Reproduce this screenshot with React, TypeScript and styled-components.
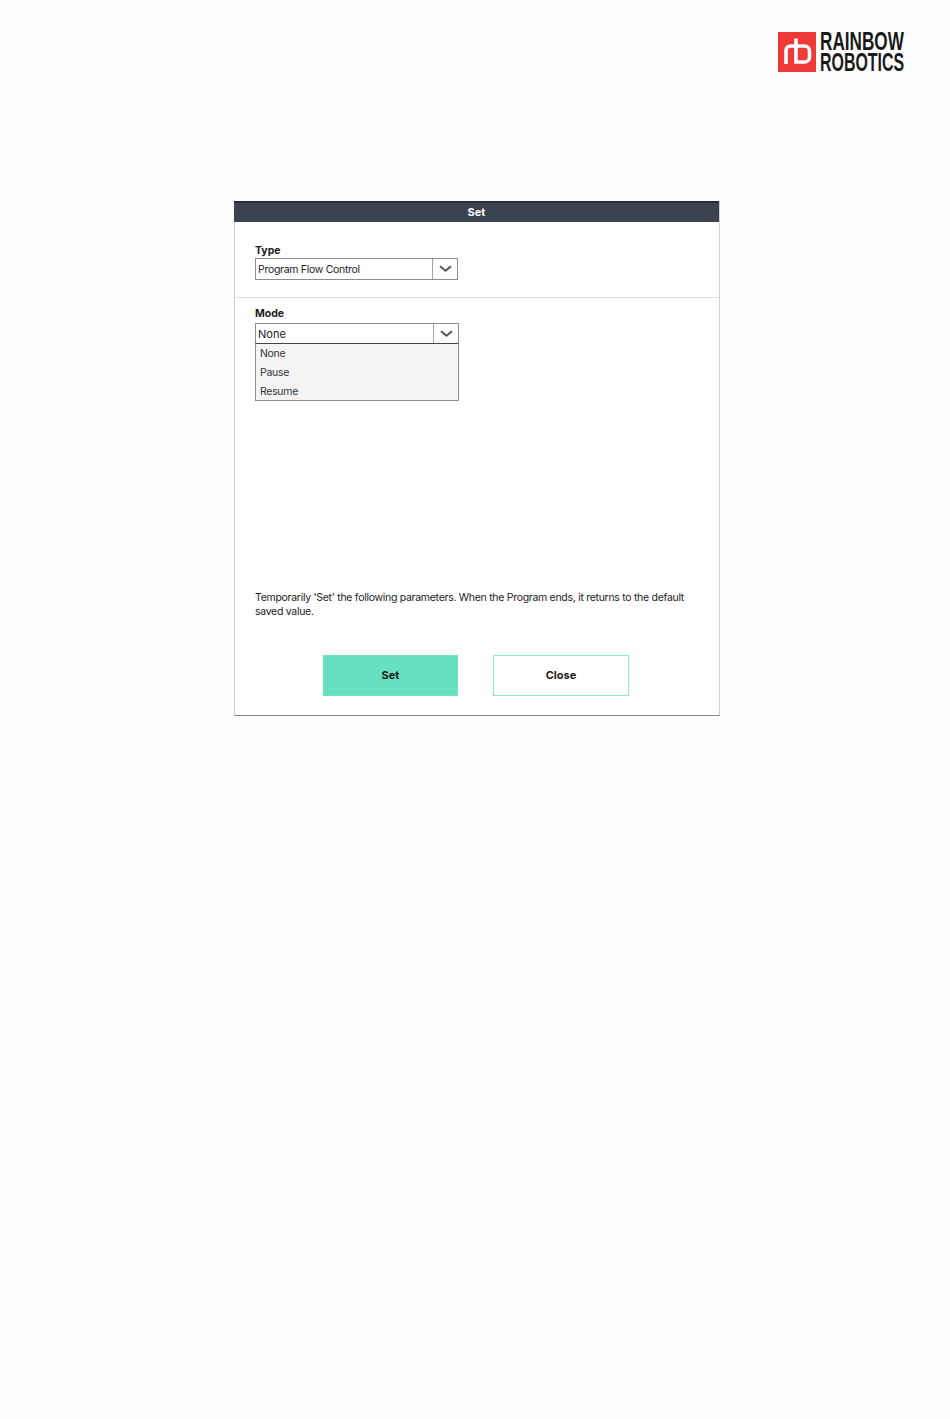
import React from "react";
import styled, { createGlobalStyle } from "styled-components";

const Global = createGlobalStyle`
  html, body { margin: 0; padding: 0; background: #fefefe; }
  body { font-family: Inter, "Liberation Sans", sans-serif; color: #1c1c1c; }
`;

const Page = styled.div`
  width: 950px;
  height: 1419px;
  box-sizing: border-box;
  padding-top: 32px;
  overflow: hidden;
`;

const LogoRow = styled.header`
  display: flex;
  justify-content: flex-end;
  gap: 4px;
  padding-right: 45px;
  height: 169px;
`;

const LogoWords = styled.div`
  width: 85px;
  height: 40px;
  display: flex;
  flex-direction: column;
  gap: 1px;
`;

const LogoWord = styled.span<{ $fit: number }>`
  display: block;
  height: 20px;
  line-height: 20px;
  font-family: "Liberation Sans", sans-serif;
  font-weight: 700;
  font-size: 22px;
  white-space: nowrap;
  color: #1a1a1a;
  transform-origin: left center;
  transform: scale(${(p) => p.$fit}, 1.2);
`;

const Dialog = styled.section`
  width: 486px;
  height: 515px;
  margin-left: 234px;
  box-sizing: border-box;
  background: #fff;
  border-left: 1px solid #cfcfd2;
  border-right: 1px solid #cfcfd2;
  border-bottom: 1px solid #85858d;
  display: flex;
  flex-direction: column;
`;

const TitleBar = styled.div`
  height: 21px;
  margin-left: -1px;
  box-sizing: border-box;
  background: #3b4250;
  border-top: 2px solid #262a3a;
  padding-bottom: 2px;
  color: #fff;
  font-size: 11px;
  font-weight: 700;
  display: flex;
  align-items: center;
  justify-content: center;
`;

const TypeSection = styled.div`
  height: 76px;
  box-sizing: border-box;
  padding: 22px 0 0 20px;
  border-bottom: 1px solid #e2e2e2;
`;

const ModeSection = styled.div`
  flex: 1;
  box-sizing: border-box;
  padding: 9px 20px 19px 20px;
  display: flex;
  flex-direction: column;
`;

const Label = styled.div<{ $tight?: boolean }>`
  font-size: 10.5px;
  line-height: 13px;
  font-weight: 700;
  margin-bottom: ${(p) => (p.$tight ? 1 : 3)}px;
`;

const Select = styled.div<{ $open?: boolean }>`
  width: ${(p) => (p.$open ? 204 : 203)}px;
  height: ${(p) => (p.$open ? 21 : 22)}px;
  box-sizing: border-box;
  border: 1px solid #8d8d8d;
  border-bottom-color: ${(p) => (p.$open ? "#444" : "#8d8d8d")};
  background: #fff;
  display: flex;
  align-items: center;
`;

const SelectValue = styled.span<{ $open?: boolean }>`
  flex: 1;
  padding-left: 2px;
  font-size: ${(p) => (p.$open ? 11 : 10.5)}px;
  letter-spacing: ${(p) => (p.$open ? 0 : -0.3)}px;
`;

const Arrow = styled.span`
  width: 24px;
  height: 100%;
  border-left: 1px solid #a5a5a5;
  display: flex;
  align-items: center;
  justify-content: center;
`;

const Options = styled.ul`
  list-style: none;
  margin: 0;
  padding: 0 0 0 4px;
  width: 204px;
  height: 57px;
  box-sizing: border-box;
  background: #f4f4f4;
  border: 1px solid #8d8d8d;
  border-top: 0;
  font-size: 10.5px;
  letter-spacing: -0.3px;
  color: #333;
`;

const Option = styled.li`
  height: 19px;
  line-height: 19px;
`;

const Help = styled.p`
  margin: auto 0 0;
  font-size: 10.5px;
  line-height: 14px;
  letter-spacing: -0.29px;
  color: #222;
`;

const Buttons = styled.div`
  display: flex;
  gap: 35px;
  margin: 35.5px 0 0 68px;
`;

const Button = styled.button<{ $primary?: boolean }>`
  width: ${(p) => (p.$primary ? 135 : 136)}px;
  height: 41.5px;
  box-sizing: border-box;
  border: 1px solid ${(p) => (p.$primary ? "#6ee2c1" : "#93e6cf")};
  background: ${(p) => (p.$primary ? "#65e1c0" : "#fff")};
  color: #1a1a1a;
  font-family: inherit;
  font-size: 11px;
  font-weight: 700;
  padding: 0;
`;

const Chevron = () => (
  <svg width="13" height="8" viewBox="0 0 13 8" fill="none">
    <path d="M1 1.2l5.5 4.6L12 1.2" stroke="#555" strokeWidth="2" />
  </svg>
);

const LogoMark = () => (
  <svg width="38" height="40" viewBox="0 0 38 40">
    <rect width="38" height="40" fill="#ee3a36" />
    <path
      d="M8 32V18.5a4.5 4.5 0 0 1 4.5-4.5H18M18 6.5V30H26.5a5 5 0 0 0 5-5V19a5 5 0 0 0-5-5H18"
      fill="none"
      stroke="#fff"
      strokeWidth="3.6"
    />
  </svg>
);

export default function App() {
  return (
    <Page>
      <Global />
      <LogoRow>
        <LogoMark />
        <LogoWords>
          <LogoWord $fit={0.78}>RAINBOW</LogoWord>
          <LogoWord $fit={0.725}>ROBOTICS</LogoWord>
        </LogoWords>
      </LogoRow>
      <Dialog>
        <TitleBar>Set</TitleBar>
        <TypeSection>
          <Label $tight>Type</Label>
          <Select>
            <SelectValue>Program Flow Control</SelectValue>
            <Arrow>
              <Chevron />
            </Arrow>
          </Select>
        </TypeSection>
        <ModeSection>
          <Label>Mode</Label>
          <Select $open>
            <SelectValue $open>None</SelectValue>
            <Arrow>
              <Chevron />
            </Arrow>
          </Select>
          <Options>
            <Option>None</Option>
            <Option>Pause</Option>
            <Option>Resume</Option>
          </Options>
          <Help>
            Temporarily 'Set' the following parameters. When the Program ends, it returns to the default saved value.
          </Help>
          <Buttons>
            <Button $primary>Set</Button>
            <Button>Close</Button>
          </Buttons>
        </ModeSection>
      </Dialog>
    </Page>
  );
}
